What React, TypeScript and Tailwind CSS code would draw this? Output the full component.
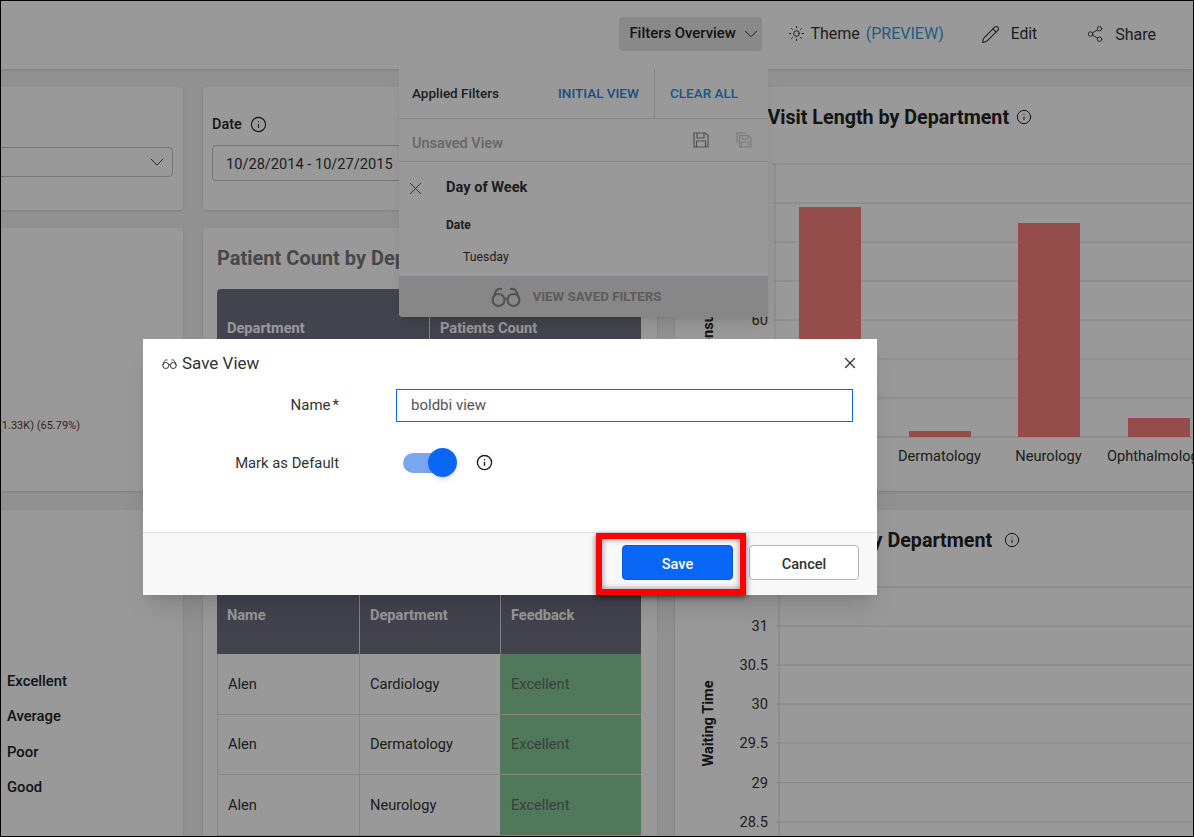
import { ChevronDown, Info, Pencil, Share2, Sun, X } from "lucide-react";

const font = "font-['Roboto','Liberation_Sans',sans-serif]";

function Glasses({ className }: { className?: string }) {
    return (
        <svg viewBox="0 0 30 20" fill="none" stroke="currentColor" strokeWidth="2" className={className}>
            <circle cx="7.5" cy="13" r="6" />
            <circle cx="22.5" cy="13" r="6" />
            <path d="M13.5 12c1-1 2-1 3 0" />
            <path d="M1.5 13 4.5 5C5.5 2.4 8 1.2 11 2" />
            <path d="M28.5 13 25.5 5C24.5 2.4 22 1.2 19 2" />
        </svg>
    );
}

function Floppy({ className }: { className?: string }) {
    return (
        <svg viewBox="0 0 16 16" fill="none" stroke="currentColor" strokeWidth="1.2" className={className}>
            <path d="M1 1h11.5L15 3.5V15H1z" />
            <path d="M4 1v5h7V1" />
            <path d="M3.5 15V9h9v6" />
        </svg>
    );
}

function FloppyCopy({ className }: { className?: string }) {
    return (
        <svg viewBox="0 0 16 16" fill="none" stroke="currentColor" strokeWidth="1.1" className={className}>
            <path d="M1 11V1h10" />
            <path d="M3.5 3.5h9L15 6v9H3.5z" />
            <path d="M6 3.5v3.5h6V3.5" />
            <path d="M5.5 15v-5h7.5v5" />
        </svg>
    );
}

function BarChart() {
    const lines = [164, 203, 242, 281, 320, 359, 398, 437];
    const bars = [
        [799, 207],
        [909, 431],
        [1018, 223],
        [1128, 418],
    ];
    return (
        <svg viewBox="675 150 530 341" className="block w-[530px] h-[341px]">
            {lines.map((y) => (
                <line key={y} x1="772" x2="1205" y1={y} y2={y} stroke="#dcdcdc" strokeWidth="1" />
            ))}
            <line x1="775" x2="775" y1="164" y2="437" stroke="#dcdcdc" />
            {bars.map(([x, y]) => (
                <rect key={x} x={x} y={y} width="62" height={437 - y} fill="#f9807f" />
            ))}
            <text x="768" y="325" textAnchor="end" fontSize="14.6" fill="#333">60</text>
            <text transform="translate(713 314) rotate(-90)" textAnchor="middle" fontSize="14.6" fontWeight="700" fill="#222">Consultation</text>
            <text x="939.5" y="461" textAnchor="middle" fontSize="14.6" fill="#333">Dermatology</text>
            <text x="1048.5" y="461" textAnchor="middle" fontSize="14.6" fill="#333">Neurology</text>
            <text x="1107" y="461" fontSize="14.6" fill="#333">Ophthalmology</text>
        </svg>
    );
}

function LineChart() {
    const ticks = [
        ["31", 626],
        ["30.5", 665],
        ["30", 704],
        ["29.5", 743],
        ["29", 782.5],
        ["28.5", 822],
    ] as const;
    return (
        <svg viewBox="675 570 530 267" className="block w-[530px] h-[267px]">
            <line x1="779" x2="1205" y1="587" y2="587" stroke="#dcdcdc" />
            {ticks.map(([label, y]) => (
                <g key={label}>
                    <line x1="776" x2="1205" y1={y} y2={y} stroke="#dcdcdc" />
                    <text x="768" y={y + 5} textAnchor="end" fontSize="14.6" fill="#333">{label}</text>
                </g>
            ))}
            <line x1="779" x2="779" y1="587" y2="837" stroke="#dcdcdc" />
            <text transform="translate(713 723.5) rotate(-90)" textAnchor="middle" fontSize="14.6" fontWeight="700" fill="#222">Waiting Time</text>
        </svg>
    );
}

const feedbackRows = ["Cardiology", "Dermatology", "Neurology"];

export default function App() {
    return (
        <div className={`relative w-[1194px] h-[837px] overflow-hidden border border-black bg-[#f2f2f2] ${font}`}>
            {/* top bar */}
            <div className="h-[68px] bg-white shadow-sm flex items-center justify-end pr-[37px] pb-[3px] text-[#333] text-[16px]">
                <div className="w-[143px] h-[34px] mr-[26px] rounded bg-[#e4e4e4] flex items-center justify-between pl-[10px] pr-0 text-[14.9px] font-medium text-[#222] whitespace-nowrap">
                    <span>Filters Overview</span>
                    <ChevronDown size={22} strokeWidth={1} className="shrink-0" />
                </div>
                <Sun size={17} strokeWidth={1.4} className="mr-[5px]" />
                <span>Theme</span>
                <span className="ml-[6px] text-[#2a9fd6]">(PREVIEW)</span>
                <Pencil size={19} strokeWidth={1.3} className="ml-[37px] mr-[11px] mt-px" />
                <span className="text-[15.6px] mt-[2px]">Edit</span>
                <Share2 size={18} strokeWidth={1.2} className="ml-[49px] mr-[11px]" />
                <span className="mt-[2px]">Share</span>
            </div>

            {/* dashboard */}
            <div className="flex pt-[18px]">
                <div className="w-[182px] flex flex-col gap-[18px] shrink-0">
                    <div className="h-[123px] bg-white rounded-r shadow-sm pt-[60px] pr-[10px]">
                        <div className="h-[30px] -ml-[10px] border border-[#c4c4c4] rounded flex items-center justify-end pr-[3px]">
                            <ChevronDown size={24} strokeWidth={1} className="text-[#444]" />
                        </div>
                    </div>
                    <div className="h-[263px] bg-white rounded-r shadow-sm pt-[190px] pr-[103px] flex justify-end">
                        <span className="text-[11px] text-[#5a4030] whitespace-nowrap h-[14px]">Excellent (1.33K) (65.79%)</span>
                    </div>
                    <div className="h-[340px] mt-px bg-white shadow-sm pt-[153.5px] pl-[6px] text-[14.8px] font-medium text-[#222]">
                        {["Excellent", "Average", "Poor", "Good"].map((l) => (
                            <div key={l} className="h-[35.5px] leading-[35.5px]">{l}</div>
                        ))}
                    </div>
                </div>

                <div className="w-[454px] ml-[20px] flex flex-col gap-[18px] shrink-0">
                    <div className="h-[123px] bg-white rounded shadow-sm pt-[27px] px-[9px]">
                        <div className="flex items-center gap-[8px] h-[20px] text-[14.4px] font-medium text-[#222]">
                            <span className="pt-[2px]">Date</span> <Info size={17} strokeWidth={1.6} />
                        </div>
                        <div className="mt-[11px] h-[36px] border border-[#c4c4c4] rounded flex items-center pl-[13px] pt-[3px] text-[14.6px] text-[#333]">
                            10/28/2014 - 10/27/2015
                        </div>
                    </div>
                    <div className="h-[263px] bg-white rounded shadow-sm pt-[18px] pl-[14px] pr-[16px]">
                        <div className="text-[20px] leading-[24px] font-bold text-[#777]">Patient Count by Department</div>
                        <div className="mt-[19px] h-[78px] bg-[#717182] rounded-t grid grid-cols-2 items-center text-[14.6px] font-bold text-white">
                            <div className="pl-[10px] pt-[2px] h-full flex items-center">Department</div>
                            <div className="pl-[10px] pt-[2px] h-full flex items-center border-l border-[#ddd]">Patients Count</div>
                        </div>
                    </div>
                    <div className="h-[340px] mt-px bg-white shadow-sm pt-[18px] pl-[14px] pr-[16px]">
                        <div className="text-[20px] leading-[24px] font-bold text-[#777]">Patient Feedback</div>
                        <div className="mt-[24px] text-[14.6px]">
                            <div className="h-[78px] bg-[#717182] grid grid-cols-[142px_141px_141px] font-bold text-white">
                                <div className="pl-[10px] pt-[2px] flex items-center">Name</div>
                                <div className="pl-[10px] pt-[2px] flex items-center border-l border-[#ddd]">Department</div>
                                <div className="pl-[10px] pt-[2px] flex items-center border-l border-[#ddd]">Feedback</div>
                            </div>
                            {feedbackRows.map((d) => (
                                <div key={d} className="h-[60.5px] grid grid-cols-[142px_141px_141px] border-b border-[#e2e2e2] text-[#333]">
                                    <div className="pl-[10px] pt-[2px] flex items-center border-l border-[#e2e2e2]">Alen</div>
                                    <div className="pl-[10px] pt-[2px] flex items-center border-l border-[#e2e2e2]">{d}</div>
                                    <div className="pl-[11px] pt-[2px] flex items-center bg-[#86ca98] text-[#5f6a62]">Excellent</div>
                                </div>
                            ))}
                        </div>
                    </div>
                </div>

                <div className="w-[530px] ml-[18px] flex flex-col gap-[18px] shrink-0">
                    <div className="h-[404px] bg-white shadow-sm pt-[19px] pl-[15px]">
                        <div className="flex items-center gap-[7px] text-[19.7px] leading-[24px] font-bold text-[#222]">
                            Average Visit Length by Department <Info size={16} strokeWidth={1.5} className="-mt-[2px]" />
                        </div>
                        <div className="-ml-[15px] mt-[20px]"><BarChart /></div>
                    </div>
                    <div className="h-[340px] mt-px bg-white shadow-sm pt-[19px] pl-[21px]">
                        <div className="flex items-center gap-[12px] text-[19.7px] leading-[24px] font-bold text-[#222]">
                            Avg. Waiting Time by Department <Info size={16} strokeWidth={1.5} className="-mt-[2px]" />
                        </div>
                        <div className="-ml-[21px] mt-[17px]"><LineChart /></div>
                    </div>
                </div>
            </div>

            {/* filters dropdown */}
            <div className="absolute left-[398px] top-[68px] w-[369px] h-[248px] bg-white rounded-b shadow-lg flex flex-col text-[#333]">
                <div className="h-[50px] flex items-center border-b border-[#d4dde6] shrink-0 text-[13.5px] font-medium">
                    <span className="pl-[13px] w-[159px]">Applied Filters</span>
                    <span className="w-[96px] text-[#2f80d8]">INITIAL VIEW</span>
                    <span className="h-full pl-[15px] flex items-center border-l border-[#d4dde6] text-[#2c92d5]">CLEAR ALL</span>
                </div>
                <div className="h-[43px] flex items-center border-b border-[#d4dde6] pl-[13px] pr-[16px] shrink-0 text-[14.5px] font-medium text-[#aaa]">
                    <span className="flex-1 pt-[7px]">Unsaved View</span>
                    <Floppy className="w-[16px] h-[16px] text-[#888] mr-[27px]" />
                    <FloppyCopy className="w-[16px] h-[16px] text-[#ccc]" />
                </div>
                <div className="flex-1 relative pl-[47px] pt-[17px]">
                    <X size={21} strokeWidth={1} className="absolute left-[6px] top-[16px] text-[#444]" />
                    <div className="text-[14.6px] leading-[16px] font-bold">Day of Week</div>
                    <div className="mt-[23px] text-[12px] leading-[14px] font-bold">Date</div>
                    <div className="mt-[18px] ml-[17px] text-[12.3px] leading-[14px]">Tuesday</div>
                </div>
                <div className="h-[41px] shrink-0 bg-[#e2e2e2] border-t border-[#d4dde6] rounded-b flex items-center justify-center gap-[11px] pr-[14px] text-[13.3px] font-bold text-[#999]">
                    <Glasses className="w-[30px] h-[20px] text-[#888]" />
                    VIEW SAVED FILTERS
                </div>
            </div>

            <div className="absolute inset-0 bg-black/40" />

            {/* save view dialog */}
            <div className="absolute left-[142px] top-[338px] w-[734px] h-[256px] bg-white shadow-xl flex flex-col text-[#333]">
                <div className="flex-1">
                    <div className="h-[50px] flex items-center pl-[19px] pr-[18px]">
                        <Glasses className="w-[15px] h-[10px] mr-[5px]" />
                        <span className="flex-1 text-[17px]">Save View</span>
                        <X size={18} strokeWidth={1.7} className="-mt-[3px]" />
                    </div>
                    <div className="flex items-center h-[33px] text-[15px]">
                        <div className="w-[196px] text-right">Name<span className="ml-[2px]">*</span></div>
                        <div className="ml-[57px] w-[457px] h-full border border-[#0a66f5] flex items-center pl-[14px] text-[15px] text-[#555]">boldbi view</div>
                    </div>
                    <div className="flex items-center h-[36px] mt-[23px] text-[14.8px]">
                        <div className="w-[196px] text-right">Mark as Default</div>
                        <div className="relative ml-[64px] w-[47px] h-[20px] rounded-full bg-[#7ba6f1]">
                            <div className="absolute -right-[7px] -top-[5px] w-[29px] h-[29px] rounded-full bg-[#0a66f5] shadow-md" />
                        </div>
                        <Info size={17} strokeWidth={2} className="ml-[26px] -mt-[2px] text-[#222]" />
                    </div>
                </div>
                <div className="h-[63px] shrink-0 bg-[#f8f8f8] border-t border-[#e2e2e2] flex items-start justify-end gap-[16px] pt-[12px] pr-[18px] text-[14.6px] font-medium">
                    <button className="w-[111px] h-[35px] pt-[5px] rounded border border-[#0a58d8] bg-[#0a66f5] text-white">Save</button>
                    <button className="w-[110px] h-[35px] pt-[5px] rounded border border-[#b5b5b5] bg-white text-[#333]">Cancel</button>
                </div>
            </div>

            {/* annotation */}
            <div className="absolute left-[595px] top-[532px] w-[150px] h-[62px] border-[6px] border-[#ff0000] shadow-[0_2px_6px_rgba(0,0,0,0.6),inset_0_0_6px_rgba(0,0,0,0.45)]" />
        </div>
    );
}
